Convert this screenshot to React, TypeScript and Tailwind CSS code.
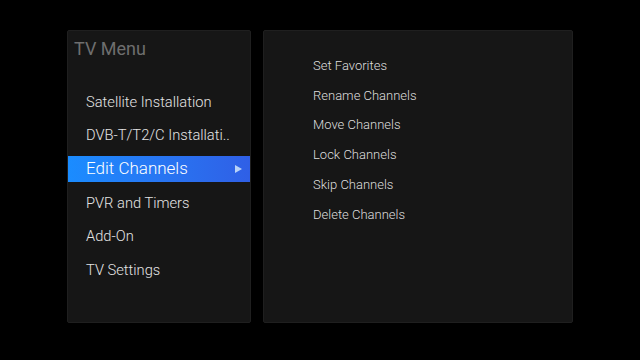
import React from 'react';

const mainItems = [
  'Satellite Installation',
  'DVB-T/T2/C Installati..',
  'Edit Channels',
  'PVR and Timers',
  'Add-On',
  'TV Settings',
];

const subItems = [
  'Set Favorites',
  'Rename Channels',
  'Move Channels',
  'Lock Channels',
  'Skip Channels',
  'Delete Channels',
];

export default function App() {
  const selected = 2;

  return (
    <div
      className="flex h-[360px] w-[640px] gap-[12px] bg-black pl-[67px] pt-[30px]"
      style={{ fontFamily: 'Roboto, "Liberation Sans", sans-serif' }}>
      {/* Main menu */}
      <div className="h-[293px] w-[184px] rounded-[2px] border border-[#1f1f1f] bg-[#161616]">
        <div className="pl-[6px] pt-[7px] text-[18px] leading-[22px] text-[#6e6e6e]">TV Menu</div>
        <div className="mt-[25px]">
          {mainItems.map((item, i) =>
            i === selected ? (
              <div key={item} className="flex h-[33.6px] items-center">
                <div className="flex h-[26px] w-full items-center justify-between bg-gradient-to-r from-[#1a8cff] to-[#2f5fe6] pl-[18px] pr-[8px]">
                  <span className="text-[17px] font-light text-white">{item}</span>
                  <svg width="7" height="8" viewBox="0 0 7 8">
                    <path d="M0 0 L7 4 L0 8 Z" fill="#b9d2f7" />
                  </svg>
                </div>
              </div>
            ) : (
              <div
                key={item}
                className="flex h-[33.6px] items-center pl-[18px] text-[14.7px] font-light text-[#e4e4e4]">
                {item}
              </div>
            ),
          )}
        </div>
      </div>

      {/* Sub menu */}
      <div className="h-[293px] w-[310px] rounded-[2px] border border-[#1f1f1f] bg-[#161616] pl-[49px] pt-[20px]">
        {subItems.map((item) => (
          <div key={item} className="flex h-[29.7px] items-center text-[13px] font-light text-[#dedede]">
            {item}
          </div>
        ))}
      </div>
    </div>
  );
}
